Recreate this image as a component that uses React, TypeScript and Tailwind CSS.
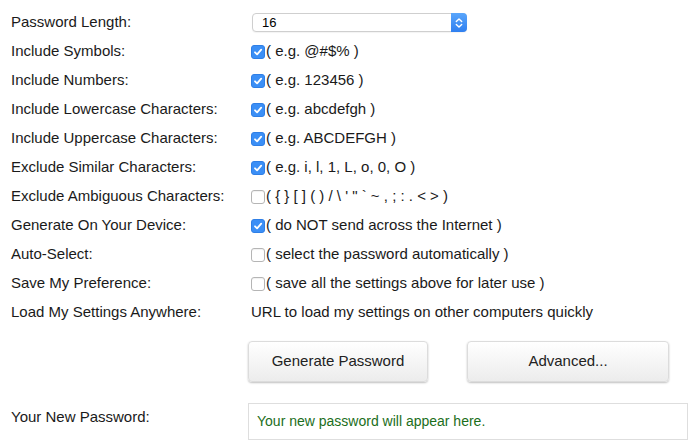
import React from "react";

function Check({ on }: { on: boolean }) {
  if (on) {
    return (
      <span className="inline-flex h-[14px] w-[14px] shrink-0 items-center justify-center rounded-[3px] bg-[#3b8ff6] border border-[#2f7fe6]">
        <svg width="10" height="10" viewBox="0 0 10 10">
          <path d="M2 5.3 L4.1 7.4 L8.2 2.6" fill="none" stroke="white" strokeWidth="1.8" strokeLinecap="round" strokeLinejoin="round" />
        </svg>
      </span>
    );
  }
  return <span className="inline-block h-[14px] w-[14px] shrink-0 rounded-[3px] border border-[#b5b5b5] bg-white shadow-[inset_0_1px_1px_rgba(0,0,0,0.06)]" />;
}

const rows: { label: string; on: boolean; text: string }[] = [
  { label: "Include Symbols:", on: true, text: "( e.g. @#$% )" },
  { label: "Include Numbers:", on: true, text: "( e.g. 123456 )" },
  { label: "Include Lowercase Characters:", on: true, text: "( e.g. abcdefgh )" },
  { label: "Include Uppercase Characters:", on: true, text: "( e.g. ABCDEFGH )" },
  { label: "Exclude Similar Characters:", on: true, text: "( e.g. i, l, 1, L, o, 0, O )" },
  { label: "Exclude Ambiguous Characters:", on: false, text: "( { } [ ] ( ) / \\ ' \" ` ~ , ; : . < > )" },
  { label: "Generate On Your Device:", on: true, text: "( do NOT send across the Internet )" },
  { label: "Auto-Select:", on: false, text: "( select the password automatically )" },
  { label: "Save My Preference:", on: false, text: "( save all the settings above for later use )" },
];

export default function App() {
  return (
    <div className="h-[447px] w-[700px] overflow-hidden bg-white text-[15px] text-[#1a1a1a] [font-family:'Liberation_Sans',Arial,sans-serif]">
      <div className="pt-[8px]">
        <div className="flex h-[29px] items-center">
          <div className="w-[252px] pl-[11px]">Password Length:</div>
          <div className="flex h-[19px] w-[215px] items-center justify-between rounded-[4px] border border-[#cfcfcf] bg-white shadow-[0_1px_1px_rgba(0,0,0,0.05)]">
            <span className="pl-[9px] text-[13px] text-black">16</span>
            <span className="flex h-[19px] w-[16px] -mr-px items-center justify-center rounded-r-[4px] bg-gradient-to-b from-[#5aa6fb] to-[#2f7ff0]">
              <svg width="8" height="12" viewBox="0 0 8 12">
                <path d="M1.3 4.6 L4 1.9 L6.7 4.6 M1.3 7.4 L4 10.1 L6.7 7.4" fill="none" stroke="white" strokeWidth="1.4" strokeLinecap="round" strokeLinejoin="round" />
              </svg>
            </span>
          </div>
        </div>
        {rows.map((r) => (
          <div key={r.label} className="flex h-[29px] items-center">
            <div className="w-[251px] pl-[11px]">{r.label}</div>
            <div className="flex items-center gap-[1px]">
              <Check on={r.on} />
              <span className="whitespace-pre">{r.text}</span>
            </div>
          </div>
        ))}
        <div className="flex h-[29px] items-center">
          <div className="w-[251px] pl-[11px]">Load My Settings Anywhere:</div>
          <div>URL to load my settings on other computers quickly</div>
        </div>
      </div>
      <div className="mt-[14px] flex gap-[39px] pl-[248px]">
        <button className="h-[41px] w-[180px] rounded-[4px] border border-[#dcdcdc] bg-gradient-to-b from-white to-[#ececec] text-[15px] text-[#222] shadow-[0_1px_2px_rgba(0,0,0,0.25)]">
          Generate Password
        </button>
        <button className="h-[41px] w-[202px] rounded-[4px] border border-[#dcdcdc] bg-gradient-to-b from-white to-[#ececec] text-[15px] text-[#222] shadow-[0_1px_2px_rgba(0,0,0,0.25)]">
          Advanced...
        </button>
      </div>
      <div className="mt-[21px] flex">
        <div className="w-[248px] pl-[11px] pt-[3px]">Your New Password:</div>
        <div className="flex h-[37px] w-[440px] items-center border border-[#dedede] pl-[8px] text-[14px] text-[#1b6e1b]">
          Your new password will appear here.
        </div>
      </div>
    </div>
  );
}
